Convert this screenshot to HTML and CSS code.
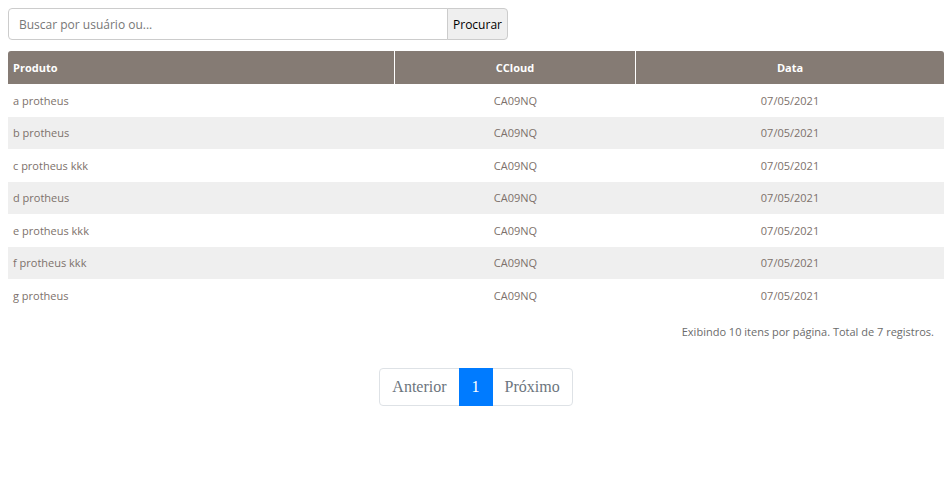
FILE: index.html
```html
<!DOCTYPE html>
<html lang="pt-BR">
<head>
<meta charset="utf-8">
<title>Produtos</title>
<link rel="stylesheet" href="styles.css">
</head>
<body>
<div class="search">
  <input class="search-input" type="text" placeholder="Buscar por usuário ou...">
  <button class="search-btn">Procurar</button>
</div>
<table class="grid">
  <thead>
    <tr><th class="c-prod">Produto</th><th class="c-cc">CCloud</th><th class="c-data">Data</th></tr>
  </thead>
  <tbody>
    <tr><td>a protheus</td><td class="center">CA09NQ</td><td class="center">07/05/2021</td></tr>
    <tr><td>b protheus</td><td class="center">CA09NQ</td><td class="center">07/05/2021</td></tr>
    <tr><td>c protheus kkk</td><td class="center">CA09NQ</td><td class="center">07/05/2021</td></tr>
    <tr><td>d protheus</td><td class="center">CA09NQ</td><td class="center">07/05/2021</td></tr>
    <tr><td>e protheus kkk</td><td class="center">CA09NQ</td><td class="center">07/05/2021</td></tr>
    <tr><td>f protheus kkk</td><td class="center">CA09NQ</td><td class="center">07/05/2021</td></tr>
    <tr><td>g protheus</td><td class="center">CA09NQ</td><td class="center">07/05/2021</td></tr>
  </tbody>
</table>
<p class="info">Exibindo 10 itens por página. Total de 7 registros.</p>
<nav class="pager">
  <ul class="pagination">
    <li class="page"><a class="page-link">Anterior</a></li>
    <li class="page active"><a class="page-link">1</a></li>
    <li class="page"><a class="page-link">Próximo</a></li>
  </ul>
</nav>
</body>
</html>
```
FILE: styles.css
```css
body {
  margin: 8px;
  font-family: "Open Sans", sans-serif;
  background: #fff;
}
.search {
  display: flex;
  width: 500px;
  height: 32px;
}
.search-input {
  box-sizing: border-box;
  width: 440px;
  height: 32px;
  border: 1px solid #ccc;
  border-radius: 4px 0 0 4px;
  padding: 0 10px;
  font-family: "Open Sans", sans-serif;
  font-size: 12px;
  color: #333;
  outline: none;
}
.search-input::placeholder {
  color: #777;
}
.search-btn {
  box-sizing: border-box;
  width: 61px;
  height: 32px;
  margin-left: -1px;
  border: 1px solid #ccc;
  border-radius: 0 4px 4px 0;
  background: #efefef;
  font-family: "Open Sans", sans-serif;
  font-size: 12px;
  color: #000;
  padding: 0 4px;
}
.grid {
  width: 936px;
  margin-top: 11px;
  border-collapse: separate;
  border-spacing: 0;
  font-size: 11px;
}
.grid th {
  background: #857b74;
  color: #fff;
  font-weight: bold;
  height: 33px;
  padding: 0 5px;
  box-sizing: border-box;
  text-align: center;
}
.grid th.c-prod {
  width: 387px;
  text-align: left;
  border-right: 1px solid #fff;
  border-top-left-radius: 3px;
}
.grid th.c-cc {
  width: 241px;
  border-right: 1px solid #fff;
}
.grid th.c-data {
  border-top-right-radius: 3px;
}
.grid td {
  height: 32.5px;
  padding: 0 5px;
  color: #7d716b;
  box-sizing: border-box;
}
.grid tbody tr:nth-child(even) td {
  background: #efefef;
}
.grid td.center {
  text-align: center;
}
.info {
  margin: 12px 10px 0 0;
  text-align: right;
  font-size: 11px;
  color: #6b6b6b;
}
.pager {
  display: flex;
  justify-content: center;
  margin-top: 29px;
}
.pagination {
  display: flex;
  list-style: none;
  margin: 0;
  padding: 0;
  font-family: "Liberation Serif", serif;
  font-size: 16px;
}
.page-link {
  display: block;
  padding: 8px 12px;
  line-height: 20px;
  color: #6c757d;
  background: #fff;
  border: 1px solid #dee2e6;
  margin-left: -1px;
}
.page:first-child .page-link {
  margin-left: 0;
  border-radius: 4px 0 0 4px;
}
.page:last-child .page-link {
  border-radius: 0 4px 4px 0;
}
.page.active .page-link {
  background: #007bff;
  border-color: #007bff;
  color: #fff;
  position: relative;
  z-index: 1;
}
```
